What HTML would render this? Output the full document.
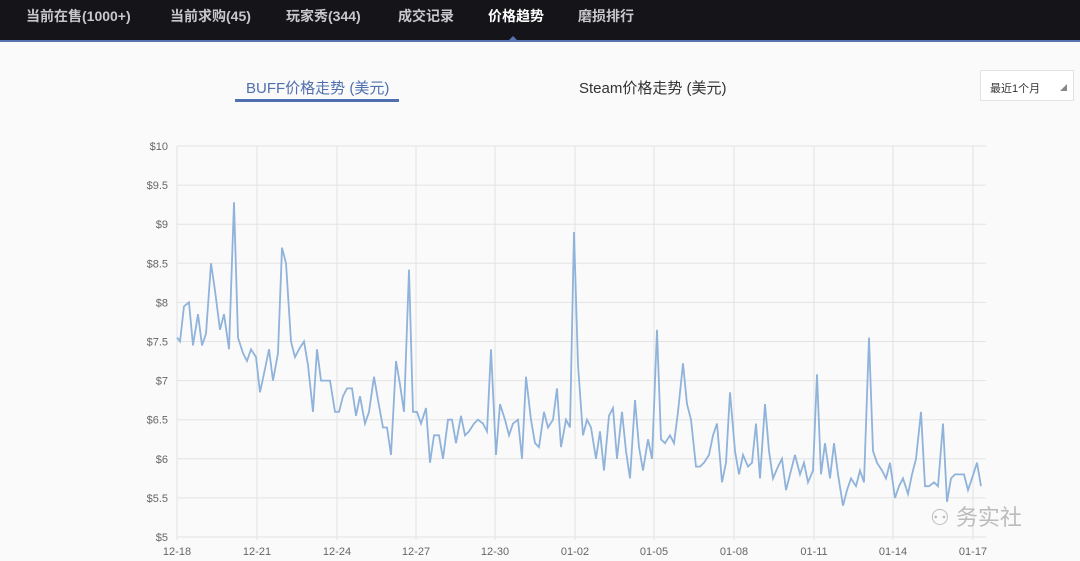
<!DOCTYPE html>
<html><head><meta charset="utf-8"><style>
body{margin:0;width:1080px;height:561px;overflow:hidden;background:#fafafa;font-family:"Liberation Sans","Noto Sans CJK SC",sans-serif;position:relative}
.nav{position:absolute;left:0;top:0;width:1080px;height:40px;background:#141419;border-bottom:2px solid #5874b0}
.nav span{position:absolute;top:6px;font-size:14px;color:#c8c8cc;font-weight:bold}
.tri{position:absolute;left:509px;top:32px;width:0;height:0;border:4px solid transparent;border-bottom-color:#5874b0}
.t{position:absolute;font-size:15px}
svg{position:absolute;left:0;top:0}
.sel{position:absolute;left:980px;top:70px;width:94px;height:31px;border:1px solid #e2e2e2;background:#fff;font-size:11px;color:#333;box-sizing:border-box;padding:9px 0 0 9px}
</style></head><body>
<div class="nav">
<span style="left:26px">当前在售(1000+)</span>
<span style="left:170px">当前求购(45)</span>
<span style="left:286px">玩家秀(344)</span>
<span style="left:398px">成交记录</span>
<span style="left:488px;color:#fff">价格趋势</span>
<span style="left:578px">磨损排行</span>
<div class="tri"></div>
</div>
<div class="t" style="left:246px;top:77px;color:#4f6fae">BUFF价格走势 (美元)</div>
<div style="position:absolute;left:235px;top:99px;width:164px;height:3px;background:#4f6fae"></div>
<div class="t" style="left:579px;top:77px;color:#333">Steam价格走势 (美元)</div>
<div class="sel">最近1个月<span style="position:absolute;right:6px;top:12px;font-size:7px;color:#888">◢</span></div>
<svg id="c" width="1080" height="561" font-family="Liberation Sans, sans-serif" font-size="11" fill="#666"></svg>
<div style="position:absolute;left:930px;top:500px;font-size:22px;color:#bbb">⚇ 务实社</div>
<script>
var s=document.getElementById('c'),h='';
function Y(v){return 537-(v-5)*78.2}
for(var i=0;i<=10;i++){var v=5+i*0.5,y=Y(v);h+='<line x1="177" x2="986" y1="'+y+'" y2="'+y+'" stroke="#e3e3e3"/>';h+='<text x="168" y="'+(y+4)+'" text-anchor="end">$'+v+'</text>';}
var xs=[177,257,337,416,495,575,654,734,814,893,973],lb=['12-18','12-21','12-24','12-27','12-30','01-02','01-05','01-08','01-11','01-14','01-17'];
xs.forEach(function(x,i){h+='<line x1="'+x+'" x2="'+x+'" y1="146" y2="540" stroke="#e3e3e3"/><text x="'+x+'" y="555" text-anchor="middle">'+lb[i]+'</text>';});
var d=[177,7.55,180,7.5,184,7.95,189,8.0,193,7.45,198,7.85,202,7.45,206,7.6,211,8.5,215,8.15,220,7.65,224,7.85,229,7.4,234,9.28,238,7.55,243,7.35,247,7.25,251,7.4,256,7.3,260,6.85,265,7.15,269,7.4,273,7.0,278,7.35,282,8.7,286,8.5,291,7.5,295,7.3,299,7.4,304,7.5,308,7.2,313,6.6,317,7.4,321,7.0,326,7.0,330,7.0,335,6.6,339,6.6,343,6.8,347,6.9,352,6.9,356,6.55,360,6.8,365,6.45,369,6.6,374,7.05,378,6.75,383,6.4,387,6.4,391,6.05,396,7.25,400,6.95,404,6.6,409,8.42,413,6.6,417,6.6,421,6.45,426,6.65,430,5.95,434,6.3,439,6.3,443,6.0,448,6.5,452,6.5,456,6.2,461,6.55,465,6.3,469,6.35,474,6.45,478,6.5,483,6.45,487,6.35,491,7.4,496,6.05,500,6.7,505,6.5,509,6.3,513,6.45,518,6.5,522,6.0,526,7.05,531,6.5,535,6.2,539,6.15,544,6.6,548,6.4,553,6.5,557,6.9,561,6.15,566,6.5,570,6.4,574,8.9,578,7.2,583,6.3,587,6.5,591,6.4,596,6.0,600,6.35,604,5.85,609,6.55,613,6.65,617,6.0,622,6.6,626,6.1,630,5.75,635,6.75,639,6.15,643,5.85,648,6.25,652,6.0,657,7.65,661,6.25,665,6.2,670,6.3,674,6.2,678,6.6,683,7.22,687,6.7,691,6.5,696,5.9,700,5.9,704,5.95,709,6.05,713,6.3,717,6.45,722,5.7,726,5.95,730,6.85,735,6.1,739,5.8,743,6.05,748,5.9,752,5.95,756,6.45,760,5.75,765,6.7,769,6.1,773,5.75,778,5.9,782,6.0,786,5.6,791,5.85,795,6.05,800,5.8,804,5.95,808,5.7,813,5.85,817,7.08,821,5.8,825,6.2,830,5.75,834,6.2,838,5.8,843,5.4,847,5.6,851,5.75,856,5.65,860,5.85,864,5.7,869,7.55,873,6.1,877,5.95,882,5.85,886,5.75,890,5.95,895,5.5,899,5.65,903,5.75,908,5.55,912,5.8,916,6.0,921,6.6,925,5.65,929,5.65,934,5.7,938,5.65,943,6.45,947,5.45,951,5.75,955,5.8,960,5.8,964,5.8,968,5.6,972,5.75,977,5.95,981,5.65];
var p='';for(var i=0;i<d.length;i+=2)p+=d[i]+','+Y(d[i+1]).toFixed(1)+' ';
h+='<polyline points="'+p+'" fill="none" stroke="#8fb3da" stroke-width="1.8"/>';
s.innerHTML=h;
</script>
</body></html>
